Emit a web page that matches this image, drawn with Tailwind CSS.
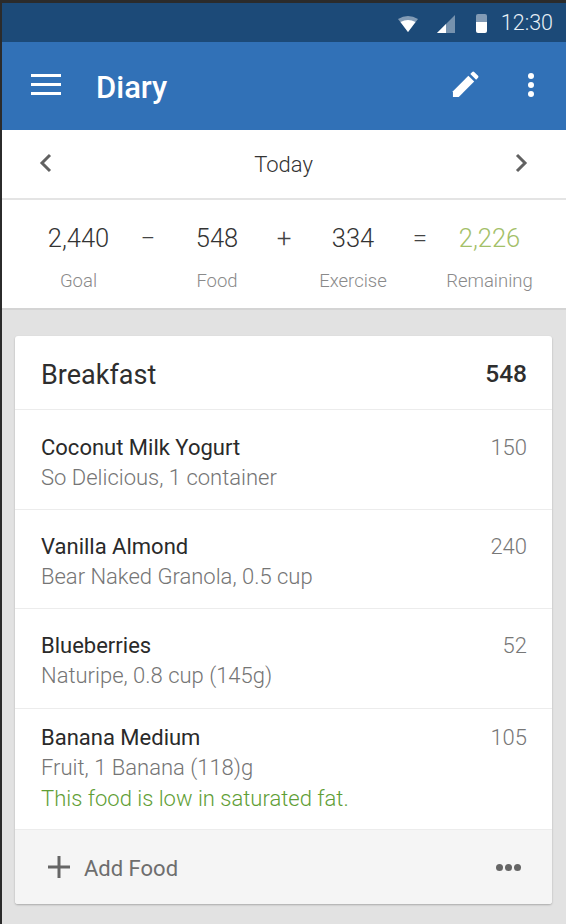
<!DOCTYPE html>
<html lang="en">
  <head>
    <meta charset="UTF-8" />
    <title>Diary</title>
    <script src="https://cdn.jsdelivr.net/npm/@tailwindcss/browser@4"></script>
  </head>
  <body class="bg-[#2b2b2b] font-['Roboto',sans-serif] w-[566px] h-[924px] overflow-hidden pl-[2px]">
    <div class="bg-[#e2e2e2] h-[924px] flex flex-col">
      <!-- status bar -->
      <div class="h-[42px] border-t-[3px] border-[#2b2b2b] pt-[1px] bg-[#1c4a78] shrink-0 flex items-center justify-end pr-[13px] text-white">
        <svg class="w-[20px] h-[18px] mr-[19px] mt-[1px]" viewBox="0 0 20 18">
          <path d="M0 4 Q10 -2 20 4 L10 17 Z" fill="#fff" fill-opacity="0.45" />
          <path d="M2.5 7 Q10 3 17.5 7 L10 17 Z" fill="#fff" />
        </svg>
        <svg class="w-[18px] h-[18px] mr-[20px] mt-[1px]" viewBox="0 0 18 18">
          <path d="M0 18 L18 0 V18 Z" fill="#fff" fill-opacity="0.4" />
          <path d="M0 18 L9 9 V18 Z" fill="#fff" />
        </svg>
        <svg class="w-[13px] h-[20px] mr-[13px]" viewBox="0 0 13 20">
          <path d="M1 3 Q1 1 3 1 H10 Q12 1 12 3 V9 H1 Z" fill="#fff" fill-opacity="0.45" />
          <path d="M1 9 H12 V18 Q12 20 10 20 H3 Q1 20 1 18 Z" fill="#fff" />
        </svg>
        <span class="text-[21.5px] font-light text-[#e8f0f6]">12:30</span>
      </div>
      <!-- app bar -->
      <div class="h-[88px] bg-[#3171b7] shrink-0 flex items-center text-white">
        <div class="ml-[29px] w-[30px] flex flex-col gap-[6px] -mt-[4px]">
          <div class="h-[3px] bg-white"></div>
          <div class="h-[3px] bg-white"></div>
          <div class="h-[3px] bg-white"></div>
        </div>
        <span class="ml-[35px] text-[31px] font-medium flex-1 mt-[5px]">Diary</span>
        <svg class="w-[27px] h-[27px] mr-[49px] -mt-[3px]" viewBox="0 0 28 28">
          <path d="M1 21 L17 5 L23 11 L7 27 L1 27 Z" fill="#fff" />
          <path d="M19 3 L21 1 Q22 0 23 1 L27 5 Q28 6 27 7 L25 9 Z" fill="#fff" />
        </svg>
        <div class="mr-[32px] flex flex-col gap-[3px] -mt-[3px]">
          <div class="w-[6px] h-[6px] rounded-full bg-white"></div>
          <div class="w-[6px] h-[6px] rounded-full bg-white"></div>
          <div class="w-[6px] h-[6px] rounded-full bg-white"></div>
        </div>
      </div>
      <!-- date -->
      <div class="h-[70px] bg-white border-b-2 border-[#e4e4e4] shrink-0 flex items-center justify-between pl-[37px] pr-[38px] text-[#555]">
        <svg class="w-[13px] h-[20px] -mt-[2px]" viewBox="0 0 13 20" fill="none" stroke="#616161" stroke-width="3"><path d="M11 2 L3 10 L11 18" /></svg>
        <span class="text-[22px] font-light text-[#333] mt-[1px]">Today</span>
        <svg class="w-[13px] h-[20px] -mt-[2px]" viewBox="0 0 13 20" fill="none" stroke="#616161" stroke-width="3"><path d="M2 2 L10 10 L2 18" /></svg>
      </div>
      <!-- calories summary -->
      <div class="h-[110px] bg-white border-b-2 border-[#d4d4d4] shrink-0 flex pl-[24px] pt-[21px] items-start">
        <div class="w-[105px] flex flex-col items-center">
          <span class="text-[25.5px] font-light text-[#333] leading-[34px]">2,440</span>
          <span class="text-[18.5px] font-light text-[#8a8a8a] mt-[13px]">Goal</span>
        </div>
        <span class="w-[34px] text-center text-[26px] font-light text-[#444] leading-[34px]">−</span>
        <div class="w-[104px] flex flex-col items-center">
          <span class="text-[25.5px] font-light text-[#333] leading-[34px]">548</span>
          <span class="text-[18.5px] font-light text-[#8a8a8a] mt-[13px]">Food</span>
        </div>
        <span class="w-[30px] text-center text-[26px] font-light text-[#444] leading-[34px]">+</span>
        <div class="w-[108px] flex flex-col items-center">
          <span class="text-[25.5px] font-light text-[#333] leading-[34px]">334</span>
          <span class="text-[18.5px] font-light text-[#8a8a8a] mt-[13px]">Exercise</span>
        </div>
        <span class="w-[26px] text-center text-[26px] font-light text-[#444] leading-[34px]">=</span>
        <div class="w-[113px] flex flex-col items-center">
          <span class="text-[25.5px] font-light text-[#a3c068] leading-[34px]">2,226</span>
          <span class="text-[18.5px] font-light text-[#8a8a8a] mt-[13px] whitespace-nowrap">Remaining</span>
        </div>
      </div>
      <!-- breakfast card -->
      <div class="mx-[13px] mt-[26px] w-[537px] bg-white rounded-[3px] shadow-[0_1px_2px_rgba(0,0,0,0.25)] overflow-hidden">
        <div class="h-[74px] border-b border-[#ececec] flex items-center justify-between pl-[26px] pr-[25px]">
          <span class="text-[27px] text-[#2e2e2e] mt-[5px]">Breakfast</span>
          <span class="text-[24.5px] font-medium text-[#2e2e2e] mt-[4px]">548</span>
        </div>
        <div class="h-[100px] border-b border-[#ececec] pl-[26px] pr-[25px] pt-[24px] flex justify-between">
          <div>
            <div class="text-[22px] leading-[28px] text-[#2a2a2a]">Coconut Milk Yogurt</div>
            <div class="text-[22px] leading-[30px] font-light text-[#757575] mt-[1px]">So Delicious, 1 container</div>
          </div>
          <span class="text-[22px] leading-[28px] font-light text-[#777]">150</span>
        </div>
        <div class="h-[99px] border-b border-[#ececec] pl-[26px] pr-[25px] pt-[23px] flex justify-between">
          <div>
            <div class="text-[22px] leading-[28px] text-[#2a2a2a]">Vanilla Almond</div>
            <div class="text-[22px] leading-[30px] font-light text-[#757575] mt-[1px]">Bear Naked Granola, 0.5 cup</div>
          </div>
          <span class="text-[22px] leading-[28px] font-light text-[#777]">240</span>
        </div>
        <div class="h-[100px] border-b border-[#ececec] pl-[26px] pr-[25px] pt-[23px] flex justify-between">
          <div>
            <div class="text-[22px] leading-[28px] text-[#2a2a2a]">Blueberries</div>
            <div class="text-[22px] leading-[30px] font-light text-[#757575] mt-[1px]">Naturipe, 0.8 cup (145g)</div>
          </div>
          <span class="text-[22px] leading-[28px] font-light text-[#777]">52</span>
        </div>
        <div class="h-[120px] pl-[26px] pr-[25px] pt-[15px] flex justify-between">
          <div>
            <div class="text-[22px] leading-[28px] text-[#2a2a2a]">Banana Medium</div>
            <div class="text-[22px] leading-[30px] font-light text-[#757575] mt-[1px]">Fruit, 1 Banana (118)g</div>
            <div class="text-[22px] leading-[30px] font-light text-[#5f9e35] mt-[1px]">This food is low in saturated fat.</div>
          </div>
          <span class="text-[22px] leading-[28px] font-light text-[#777]">105</span>
        </div>
        <div class="h-[75px] bg-[#f5f5f5] border-t border-[#ececec] flex items-center pl-[32px] pr-[30px]">
          <svg class="w-[24px] h-[24px] mr-[13px]" viewBox="0 0 24 24" fill="none" stroke="#666" stroke-width="3"><path d="M12 1 V23 M1 12 H23" /></svg>
          <span class="text-[22px] text-[#6e6e6e] flex-1 mt-[3px]">Add Food</span>
          <div class="flex gap-[2px] mr-[1px]">
            <div class="w-[7px] h-[7px] rounded-full bg-[#666]"></div>
            <div class="w-[7px] h-[7px] rounded-full bg-[#666]"></div>
            <div class="w-[7px] h-[7px] rounded-full bg-[#666]"></div>
          </div>
        </div>
      </div>
    </div>
  </body>
</html>
